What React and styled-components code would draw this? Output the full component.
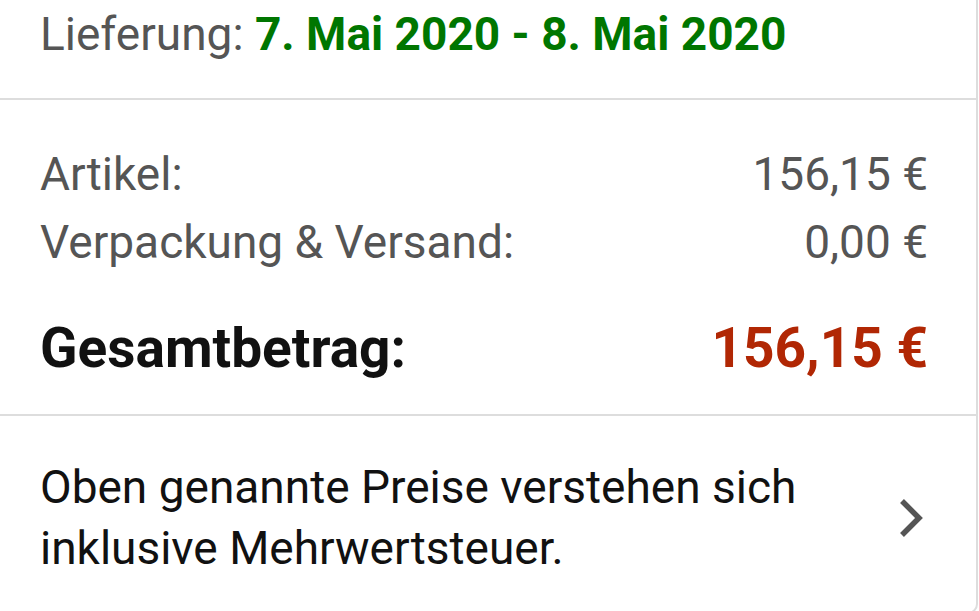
import React from "react";
import styled, { createGlobalStyle } from "styled-components";

const Global = createGlobalStyle`
  html, body { margin: 0; padding: 0; background: #ffffff; }
  body { font-family: Roboto, "Noto Sans", Arial, sans-serif; overflow: hidden; }
`;

const Card = styled.div`
  width: 978px;
  min-height: 614px;
  border-right: 2px solid #dddddd;
  border-bottom: 2px solid #dddddd;
  border-bottom-right-radius: 10px;
  background: #fff;
  box-sizing: border-box;
`;

const Section = styled.section`
  padding: ${(p) => p.$pad};
  border-top: ${(p) => (p.$divider ? "2px solid #dddddd" : "none")};
`;

const Delivery = styled.div`
  font-size: 46px;
  line-height: 54px;
  color: #555555;
  margin-left: 40px;
  white-space: nowrap;
`;

const Green = styled.span`
  color: #007600;
  font-weight: 700;
  font-size: 46px;
`;

const Row = styled.div`
  display: flex;
  justify-content: space-between;
  align-items: baseline;
  padding: 0 48px 0 40px;
  font-size: ${(p) => (p.$total ? "55px" : "46px")};
  font-weight: ${(p) => (p.$total ? 700 : 400)};
  line-height: 68px;
  color: ${(p) => (p.$total ? "#111111" : "#555555")};
  margin-top: ${(p) => p.$mt || "0"};
`;

const Price = styled.span`
  color: ${(p) => (p.$red ? "#B12704" : "inherit")};
`;

const Notice = styled.div`
  display: flex;
  align-items: center;
  justify-content: space-between;
  padding: 0 50px 0 40px;
`;

const NoticeText = styled.div`
  font-size: 46px;
  line-height: 61px;
  color: #111111;
`;

const Chevron = styled.svg`
  width: 32px;
  height: 46px;
  flex: none;
`;

export default function App() {
  return (
    <>
      <Global />
      <Card>
        <Section $pad="7px 0 37px">
          <Delivery>
            Lieferung: <Green>7. Mai 2020 - 8. Mai 2020</Green>
          </Delivery>
        </Section>
        <Section $divider $pad="40px 0 32px">
          <Row>
            <span>Artikel:</span>
            <Price>156,15 €</Price>
          </Row>
          <Row>
            <span>Verpackung &amp; Versand:</span>
            <Price>0,00 €</Price>
          </Row>
          <Row $total $mt="38px">
            <span>Gesamtbetrag:</span>
            <Price $red>156,15 €</Price>
          </Row>
        </Section>
        <Section $divider $pad="41px 0 30px">
          <Notice>
            <NoticeText>
              Oben genannte Preise verstehen sich
              <br />
              inklusive Mehrwertsteuer.
            </NoticeText>
            <Chevron viewBox="0 0 32 46">
              <path
                d="M8 6 L25 23 L8 40"
                fill="none"
                stroke="#555555"
                strokeWidth="5.5"
                strokeLinecap="butt"
                strokeLinejoin="miter"
              />
            </Chevron>
          </Notice>
        </Section>
      </Card>
    </>
  );
}
